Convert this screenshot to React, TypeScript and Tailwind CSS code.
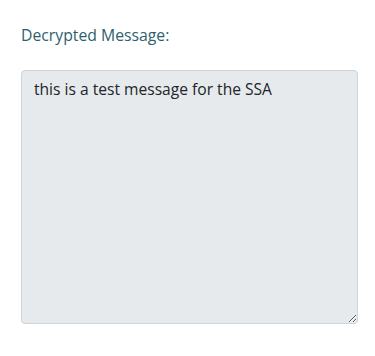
import React from 'react';

const App: React.FC = () => {
  return (
    <div className="w-[375px] h-[356px] bg-white px-[21px] pt-[24px]" style={{ fontFamily: '"Open Sans", "Noto Sans", sans-serif' }}>
      <label htmlFor="decrypted" className="block text-[15.75px] leading-[22px] text-[#2e5f6e] mb-[24px]">
        Decrypted Message:
      </label>
      <textarea
        id="decrypted"
        readOnly
        defaultValue="this is a test message for the SSA"
        className="block w-[337px] h-[254px] rounded-[4px] border border-[#ced4da] bg-[#e7eaed] px-[12px] py-[6px] text-[15.6px] leading-[24px] text-[#212529] outline-none"
      />
    </div>
  );
};

export default App;
